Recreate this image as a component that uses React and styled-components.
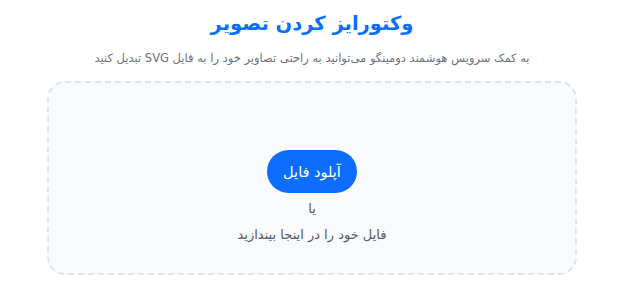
import React from "react";
import styled, { createGlobalStyle } from "styled-components";

const GlobalStyle = createGlobalStyle`
  html, body {
    margin: 0;
    padding: 0;
    background: #ffffff;
  }
  body {
    font-family: "DejaVu Sans", sans-serif;
  }
`;

const Page = styled.div`
  direction: rtl;
  width: 624px;
  height: 288px;
  display: flex;
  flex-direction: column;
  align-items: center;
  box-sizing: border-box;
  padding-top: 9px;
`;

const Title = styled.h1`
  margin: 0;
  font-size: 19.5px;
  font-weight: 700;
  color: #0d6efd;
  line-height: 30px;
`;

const Subtitle = styled.p`
  margin: 10px 0 0;
  font-size: 11.5px;
  color: #6b7280;
  line-height: 18px;
`;

const DropZone = styled.div`
  margin-top: 14px;
  width: 530px;
  height: 194px;
  box-sizing: border-box;
  border: 2px dashed #e1e4e9;
  border-radius: 18px;
  background: #f8fafc;
  display: flex;
  flex-direction: column;
  align-items: center;
  padding-top: 67px;
`;

const UploadButton = styled.button`
  font-family: inherit;
  height: 43px;
  padding: 0 16px;
  border: none;
  border-radius: 22px;
  background: #0d6efd;
  color: #ffffff;
  font-size: 14.5px;
  cursor: pointer;
`;

const Hint = styled.span`
  font-size: 13px;
  color: #555b61;
  line-height: 20px;
  margin-top: ${(p) => p.$gap}px;
`;

export default function App() {
  return (
    <>
      <GlobalStyle />
      <Page>
        <Title>وکتورایز کردن تصویر</Title>
        <Subtitle>
          به کمک سرویس هوشمند دومینگو می‌توانید به راحتی تصاویر خود را به فایل SVG تبدیل کنید
        </Subtitle>
        <DropZone>
          <UploadButton>آپلود فایل</UploadButton>
          <Hint $gap={6}>یا</Hint>
          <Hint $gap={6}>فایل خود را در اینجا بیندازید</Hint>
        </DropZone>
      </Page>
    </>
  );
}
